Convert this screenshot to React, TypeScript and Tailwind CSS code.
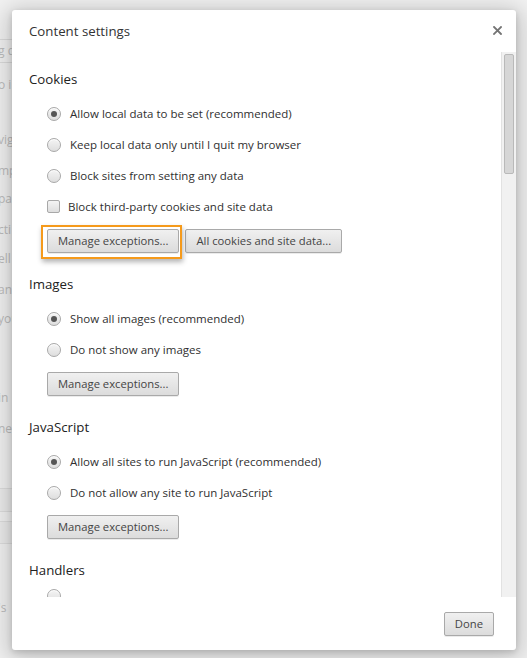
import React from "react";

const font = { fontFamily: '"Open Sans", "Noto Sans", sans-serif' };

// faded settings page that peeks out on the left of the overlay
const behind: { y: number; text: string; box?: boolean }[] = [
  { y: 39, text: "g d", box: true },
  { y: 73, text: "o i" },
  { y: 128, text: "vig" },
  { y: 159, text: "mpl" },
  { y: 187, text: "pa" },
  { y: 218, text: "cti" },
  { y: 247, text: "ell" },
  { y: 278, text: "an" },
  { y: 307, text: "you" },
  { y: 386, text: "in" },
  { y: 417, text: "ne" },
  { y: 596, text: "'s" },
];

function Radio({ checked }: { checked?: boolean }) {
  return (
    <span className="flex h-[14px] w-[14px] shrink-0 items-center justify-center rounded-full border border-[#a8a8a8] bg-gradient-to-b from-[#f4f4f4] to-[#dedede] shadow-[inset_0_1px_0_#fff]">
      {checked && <span className="h-[6px] w-[6px] rounded-full bg-[#555]" />}
    </span>
  );
}

function Option({ label, checked }: { label: string; checked?: boolean }) {
  return (
    <div className="ml-[18px] flex h-[31px] items-center gap-[9px]">
      <Radio checked={checked} />
      <span className="text-[11.5px] text-[#303030]">{label}</span>
    </div>
  );
}

function Check({ label }: { label: string }) {
  return (
    <div className="ml-[18px] flex h-[31px] items-center gap-[8px]">
      <span className="h-[13px] w-[13px] shrink-0 rounded-[2px] border border-[#a8a8a8] bg-gradient-to-b from-[#f4f4f4] to-[#dedede]" />
      <span className="text-[11.5px] text-[#303030]">{label}</span>
    </div>
  );
}

function Button({ children }: { children: React.ReactNode }) {
  return (
    <button
      type="button"
      className="flex h-[24px] items-center rounded-[2px] border border-[#a9a9a9] bg-gradient-to-b from-[#f0f0f0] to-[#dcdcdc] px-[10px] text-[11.25px] text-[#444] shadow-[0_1px_0_rgba(0,0,0,0.08)]"
    >
      {children}
    </button>
  );
}

function Heading({ children }: { children: React.ReactNode }) {
  return <div className="mb-[9px] h-[20px] text-[13.25px] leading-[20px] text-[#222]">{children}</div>;
}

export default function App() {
  return (
    <div className="relative h-[658px] w-[527px] overflow-hidden bg-[#f2f2f2]" style={font}>
      <div className="flex flex-col">
        {behind.map((b, i) => (
          <div
            key={i}
            className={`absolute left-0 flex h-[24px] w-[12px] items-center overflow-hidden text-[12px] text-[#bdbdbd] ${
              b.box ? "border-y border-[#dcdcdc]" : ""
            }`}
            style={{ top: b.y }}
          >
            <span className="-ml-[2px] whitespace-nowrap">{b.text}</span>
          </div>
        ))}
        <div className="absolute left-0 top-[488px] h-[24px] w-[60px] border-y border-[#dedede] bg-[#ececec]" />
        <div className="absolute left-0 top-[521px] h-[23px] w-[60px] border-y border-[#dedede] bg-[#ececec]" />
      </div>

      {/* dialog */}
      <div className="absolute left-[12px] top-[10px] flex h-[640px] w-[504px] flex-col rounded-[3px] bg-white shadow-[0_4px_23px_5px_rgba(0,0,0,0.2),0_2px_6px_rgba(0,0,0,0.15)]">
        <div className="flex h-[42px] shrink-0 items-start justify-between pl-[17px] pr-[14px] pt-[11px]">
          <span className="text-[13.25px] leading-[20px] text-[#333]">Content settings</span>
          <svg width="9" height="9" viewBox="0 0 9 9" className="mt-[5px]">
            <path d="M1 1L8 8M8 1L1 8" stroke="#747474" strokeWidth="1.8" strokeLinecap="square" />
          </svg>
        </div>

        <div className="flex h-[545px] shrink-0">
          <div className="flex-1 overflow-hidden pl-[17px] pt-[17px]">
            <Heading>Cookies</Heading>
            <Option label="Allow local data to be set (recommended)" checked />
            <Option label="Keep local data only until I quit my browser" />
            <Option label="Block sites from setting any data" />
            <Check label="Block third-party cookies and site data" />
            <div className="ml-[18px] mt-[7px] flex gap-[6px]">
              <div className="relative">
                <Button>Manage exceptions...</Button>
                <div className="pointer-events-none absolute -bottom-[6px] -left-[6px] -right-[3px] -top-[4px] border-2 border-[#f59a1b] shadow-[1px_3px_5px_rgba(0,0,0,0.3)]" />
              </div>
              <Button>All cookies and site data...</Button>
            </div>

            <div className="mt-[21px]">
              <Heading>Images</Heading>
              <Option label="Show all images (recommended)" checked />
              <Option label="Do not show any images" />
              <div className="ml-[18px] mt-[7px] flex">
                <Button>Manage exceptions...</Button>
              </div>
            </div>

            <div className="mt-[21px]">
              <Heading>JavaScript</Heading>
              <Option label="Allow all sites to run JavaScript (recommended)" checked />
              <Option label="Do not allow any site to run JavaScript" />
              <div className="ml-[18px] mt-[7px] flex">
                <Button>Manage exceptions...</Button>
              </div>
            </div>

            <div className="mt-[21px]">
              <Heading>Handlers</Heading>
              <div className="ml-[18px] mt-[6px] flex">
                <Radio />
              </div>
            </div>
          </div>

          {/* scrollbar */}
          <div className="w-[15px] shrink-0 border-l border-[#e2e2e2] bg-[#f1f1f1] pl-[2px] pt-[2px]">
            <div className="h-[120px] w-[10px] rounded-[2px] border border-[#b9b9b9] bg-[#d6d6d6]" />
          </div>
        </div>

        <div className="flex flex-1 justify-end pr-[22px] pt-[15px]">
          <Button>Done</Button>
        </div>
      </div>
    </div>
  );
}
